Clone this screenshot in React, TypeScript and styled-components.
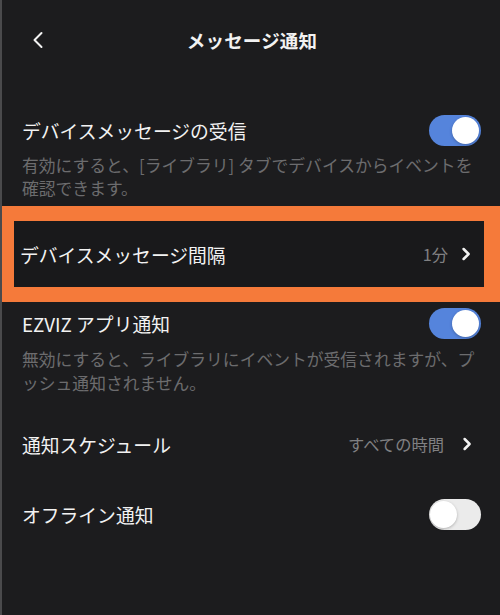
import React from "react";
import styled, { createGlobalStyle } from "styled-components";

const Global = createGlobalStyle`
  html, body { margin: 0; padding: 0; background: #1c1c1e; }
  body { font-family: "Noto Sans CJK JP", "Noto Sans", sans-serif; }
  * { box-sizing: border-box; }
`;

const Screen = styled.div`
  width: 500px;
  height: 615px;
  background: #1c1c1e;
  border-left: 2px solid #4a4a4c;
  overflow: hidden;
  color: #f2f2f2;
`;

const Header = styled.div`
  height: 80px;
  display: flex;
  align-items: center;
  justify-content: center;
  position: relative;
`;

const Back = styled.div`
  position: absolute;
  left: 29px;
  top: 31px;
  width: 16px;
  height: 18px;
  display: flex;
`;

const Title = styled.div`
  font-size: 18.5px;
  font-weight: 700;
  letter-spacing: 0.2px;
  margin-left: 2px;
`;

const List = styled.div`
  padding-top: 21px;
  display: flex;
  flex-direction: column;
`;

const Row = styled.div<{ $h: number; $mt?: number }>`
  height: ${(p) => p.$h}px;
  margin-top: ${(p) => p.$mt ?? 0}px;
  display: flex;
  align-items: center;
  justify-content: space-between;
  padding: 0 17px 0 20px;
`;

const Label = styled.div`
  font-size: 18.8px;
  color: #f2f2f2;
`;

const Desc = styled.div<{ $mt: number; $lh: number }>`
  font-size: 16.8px;
  line-height: ${(p) => p.$lh}px;
  color: #6c6c6e;
  padding: 0 20px;
  margin-top: ${(p) => p.$mt}px;
  white-space: nowrap;
`;

const Highlight = styled.div`
  background: #f57a3a;
  padding: 15px 16px 15px 14px;
  margin-top: 6px;
  margin-left: -2px;
`;

const HighlightInner = styled.div`
  background: #19191b;
  height: 66px;
  display: flex;
  align-items: center;
  justify-content: space-between;
  padding: 0 0 0 6px;
`;

const Value = styled.div<{ $gap: number; $mr: number }>`
  display: flex;
  align-items: center;
  gap: ${(p) => p.$gap}px;
  margin-right: ${(p) => p.$mr}px;
  font-size: 16.3px;
  color: #808082;
`;

const Track = styled.div<{ $on: boolean }>`
  width: 52px;
  height: 31px;
  border-radius: 16px;
  background: ${(p) => (p.$on ? "#5584dc" : "#ebebeb")};
  position: relative;
  margin-right: 2px;
`;

const Knob = styled.div<{ $on: boolean }>`
  position: absolute;
  top: 2px;
  left: ${(p) => (p.$on ? "23px" : "1px")};
  width: 27px;
  height: 27px;
  border-radius: 50%;
  background: #ffffff;
  box-shadow: 0 1px 3px rgba(0, 0, 0, 0.25);
`;

const Chevron = () => (
  <svg width="10" height="14" viewBox="0 0 10 14">
    <path d="M2.6 2 L7.6 7 L2.6 12" fill="none" stroke="#f2f2f2" strokeWidth="2.5" strokeLinecap="round" strokeLinejoin="round" />
  </svg>
);

const Toggle = ({ on }: { on: boolean }) => (
  <Track $on={on}>
    <Knob $on={on} />
  </Track>
);

export default function App() {
  return (
    <>
      <Global />
      <Screen>
        <Header>
          <Back>
            <svg width="16" height="18" viewBox="0 0 16 18">
              <path d="M10.5 2 L3.5 9 L10.5 16" fill="none" stroke="#f2f2f2" strokeWidth="2" strokeLinecap="round" strokeLinejoin="round" />
            </svg>
          </Back>
          <Title>メッセージ通知</Title>
        </Header>
        <List>
          <Row $h={58}>
            <Label>デバイスメッセージの受信</Label>
            <Toggle on />
          </Row>
          <Desc $mt={-5} $lh={23}>
            有効にすると、[ライブラリ] タブでデバイスからイベントを
            <br />
            確認できます。
          </Desc>
          <Highlight>
            <HighlightInner>
              <Label>デバイスメッセージ間隔</Label>
              <Value $gap={13} $mr={13}>
                1分
                <Chevron />
              </Value>
            </HighlightInner>
          </Highlight>
          <Row $h={42}>
            <Label>EZVIZ アプリ通知</Label>
            <Toggle on />
          </Row>
          <Desc $mt={3} $lh={24}>
            無効にすると、ライブラリにイベントが受信されますが、プ
            <br />
            ッシュ通知されません。
          </Desc>
          <Row $h={70} $mt={14}>
            <Label>通知スケジュール</Label>
            <Value $gap={18} $mr={11}>
              すべての時間
              <Chevron />
            </Value>
          </Row>
          <Row $h={70}>
            <Label>オフライン通知</Label>
            <Toggle on={false} />
          </Row>
        </List>
      </Screen>
    </>
  );
}
